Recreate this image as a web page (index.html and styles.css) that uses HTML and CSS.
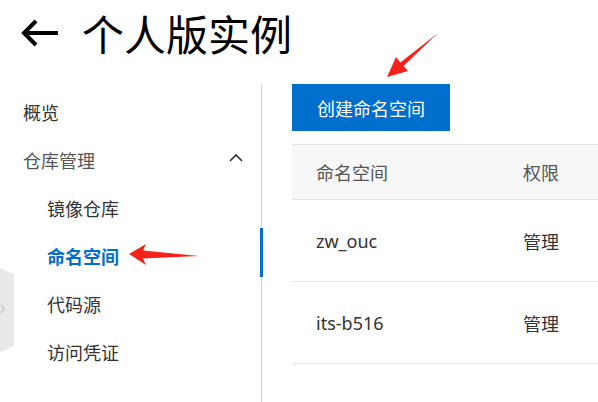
FILE: index.html
```html
<!DOCTYPE html>
<html lang="zh-CN">
<head>
<meta charset="utf-8">
<title>个人版实例</title>
<link rel="stylesheet" href="styles.css">
</head>
<body>
<div class="page">
  <header class="header">
    <svg class="back" width="38" height="30" viewBox="0 0 38 30">
      <path d="M3 14 H37 M15 2 L3 14 L15 26" fill="none" stroke="#000" stroke-width="4" stroke-linecap="butt" stroke-linejoin="miter"/>
    </svg>
    <h1 class="title">个人版实例</h1>
  </header>
  <div class="main">
    <nav class="sidebar">
      <div class="nav-item">概览</div>
      <div class="nav-item nav-group">仓库管理
        <svg class="chev" width="14" height="9" viewBox="0 0 14 9"><path d="M1 8 L7 2 L13 8" fill="none" stroke="#333" stroke-width="1.6"/></svg>
      </div>
      <div class="nav-item sub">镜像仓库</div>
      <div class="nav-item sub active">命名空间</div>
      <div class="nav-item sub">代码源</div>
      <div class="nav-item sub">访问凭证</div>
    </nav>
    <section class="content">
      <button class="btn-primary">创建命名空间</button>
      <div class="table">
        <div class="row head">
          <div class="col-name">命名空间</div>
          <div class="col-perm">权限</div>
        </div>
        <div class="row">
          <div class="col-name">zw_ouc</div>
          <div class="col-perm">管理</div>
        </div>
        <div class="row">
          <div class="col-name">its-b516</div>
          <div class="col-perm">管理</div>
        </div>
      </div>
    </section>
  </div>
  <div class="side-tab">
    <svg width="14" height="84" viewBox="0 0 14 84"><polygon points="0,0 14,6 14,78 0,84" fill="#e9e9e9"/><path d="M1 37 L4 41 L1 45" fill="none" stroke="#c8c8c8" stroke-width="1.5"/></svg>
  </div>
  <svg class="annot" width="598" height="402" viewBox="0 0 598 402">
    <polygon points="387,77 396,57 400.4,62.5 438,33 403.5,66 408,71" fill="#f5221b"/>
    <polygon points="129,254 146,244 143,250.5 199,256 143,258.5 146,265" fill="#f5221b"/>
  </svg>
</div>
</body>
</html>
```
FILE: styles.css
```css
html, body {
  margin: 0;
  padding: 0;
  background: #fff;
}
body {
  font-family: "Noto Sans", "Noto Sans CJK SC", sans-serif;
  color: #333;
  width: 598px;
  height: 402px;
  overflow: hidden;
}
.page {
  position: relative;
  width: 598px;
  height: 402px;
}
.header {
  display: flex;
  align-items: center;
  height: 66px;
  padding-left: 21px;
}
.back {
  display: block;
  margin-top: 1px;
}
.title {
  margin: 0 0 0 23px;
  font-family: "Noto Sans CJK SC", sans-serif;
  font-weight: normal;
  font-size: 42px;
  line-height: 1;
  color: #000;
}
.main {
  display: flex;
  margin-top: 18px;
}
.sidebar {
  width: 262px;
  height: 320px;
  border-right: 1px solid #d4d4d4;
  padding-top: 4px;
  box-sizing: border-box;
  flex-shrink: 0;
}
.nav-item {
  position: relative;
  display: flex;
  align-items: center;
  height: 48px;
  padding-left: 23px;
  font-family: "Noto Sans CJK SC", sans-serif;
  font-size: 18px;
  color: #333;
}
.nav-group {
  color: #555;
  justify-content: space-between;
  padding-right: 18px;
}
.chev {
  display: block;
  margin-top: -6px;
}
.sub {
  padding-left: 47px;
}
.active {
  color: #006ecc;
  font-weight: bold;
}
.active::after {
  content: "";
  position: absolute;
  right: -2px;
  top: -4px;
  width: 3px;
  height: 49px;
  background: #006ecc;
}
.content {
  flex: 1;
  padding-left: 30px;
}
.btn-primary {
  display: block;
  height: 47px;
  padding: 0 25px;
  border: none;
  background: #006ecc;
  color: #fff;
  font-family: "Noto Sans CJK SC", sans-serif;
  font-size: 18px;
  cursor: pointer;
}
.table {
  margin-top: 13px;
  width: 320px;
  border-top: 1px solid #e6e6e6;
}
.row {
  display: flex;
  align-items: center;
  height: 81px;
  border-bottom: 1px solid #e6e6e6;
  font-size: 18px;
  color: #333;
}
.row.head {
  height: 54px;
  background: #f7f7f7;
  color: #555;
}
.col-name {
  width: 207px;
  padding-left: 24px;
  font-family: "Noto Sans", "Noto Sans CJK SC", sans-serif;
}
.head .col-name, .col-perm {
  font-family: "Noto Sans CJK SC", sans-serif;
}
.side-tab {
  position: absolute;
  left: 0;
  top: 268px;
}
.side-tab svg {
  display: block;
}
.annot {
  position: absolute;
  left: 0;
  top: 0;
  pointer-events: none;
}
```
